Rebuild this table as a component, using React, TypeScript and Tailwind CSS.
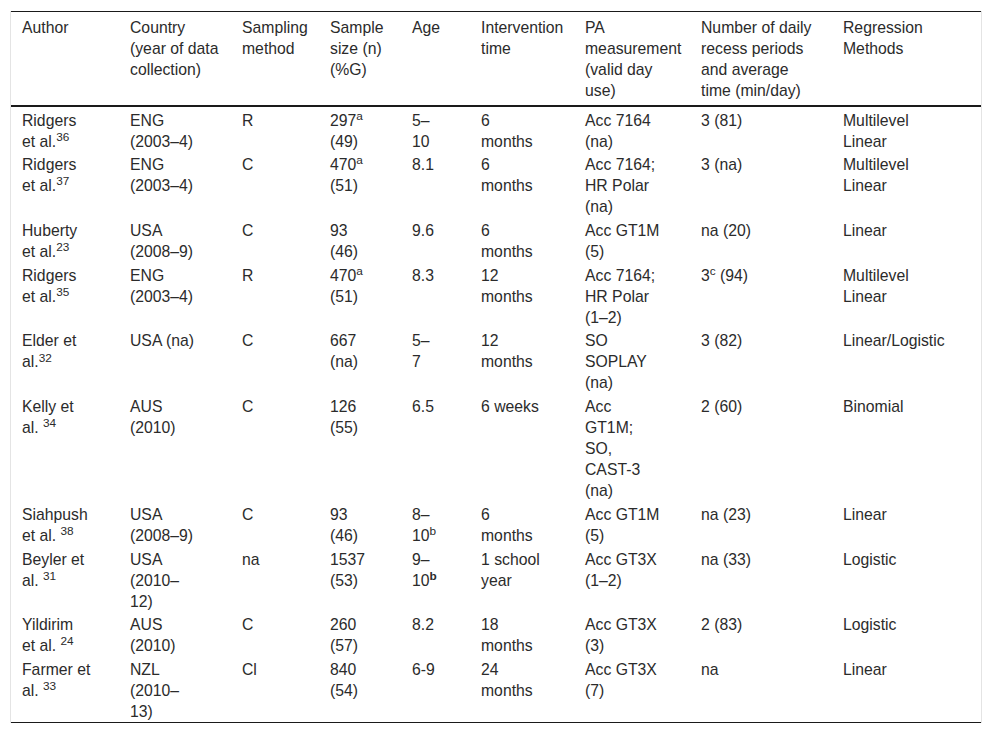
import type { ReactNode } from "react";

type Row = ReactNode[];

const S = ({ children }: { children: ReactNode }) => <sup>{children}</sup>;

const colWidths = [
  "w-[108px]",
  "w-[112px]",
  "w-[88px]",
  "w-[82px]",
  "w-[69px]",
  "w-[104px]",
  "w-[116px]",
  "w-[142px]",
  "w-[149px]",
];

const header: ReactNode[] = [
  <>Author</>,
  <>Country<br />(year of data<br />collection)</>,
  <>Sampling<br />method</>,
  <>Sample<br />size (n)<br />(%G)</>,
  <>Age</>,
  <>Intervention<br />time</>,
  <>PA<br />measurement<br />(valid day<br />use)</>,
  <>Number of daily<br />recess periods<br />and average<br />time (min/day)</>,
  <>Regression<br />Methods</>,
];

const rows: Row[] = [
  [
    <>Ridgers<br />et al.<S>36</S></>,
    <>ENG<br />(2003–4)</>,
    <>R</>,
    <>297<S>a</S><br />(49)</>,
    <>5–<br />10</>,
    <>6<br />months</>,
    <>Acc 7164<br />(na)</>,
    <>3 (81)</>,
    <>Multilevel<br />Linear</>,
  ],
  [
    <>Ridgers<br />et al.<S>37</S></>,
    <>ENG<br />(2003–4)</>,
    <>C</>,
    <>470<S>a</S><br />(51)</>,
    <>8.1</>,
    <>6<br />months</>,
    <>Acc 7164;<br />HR Polar<br />(na)</>,
    <>3 (na)</>,
    <>Multilevel<br />Linear</>,
  ],
  [
    <>Huberty<br />et al.<S>23</S></>,
    <>USA<br />(2008–9)</>,
    <>C</>,
    <>93<br />(46)</>,
    <>9.6</>,
    <>6<br />months</>,
    <>Acc GT1M<br />(5)</>,
    <>na (20)</>,
    <>Linear</>,
  ],
  [
    <>Ridgers<br />et al.<S>35</S></>,
    <>ENG<br />(2003–4)</>,
    <>R</>,
    <>470<S>a</S><br />(51)</>,
    <>8.3</>,
    <>12<br />months</>,
    <>Acc 7164;<br />HR Polar<br />(1–2)</>,
    <>3<S>c</S> (94)</>,
    <>Multilevel<br />Linear</>,
  ],
  [
    <>Elder et<br />al.<S>32</S></>,
    <>USA (na)</>,
    <>C</>,
    <>667<br />(na)</>,
    <>5–<br />7</>,
    <>12<br />months</>,
    <>SO<br />SOPLAY<br />(na)</>,
    <>3 (82)</>,
    <>Linear/Logistic</>,
  ],
  [
    <>Kelly et<br />al. <S>34</S></>,
    <>AUS<br />(2010)</>,
    <>C</>,
    <>126<br />(55)</>,
    <>6.5</>,
    <>6 weeks</>,
    <>Acc<br />GT1M;<br />SO,<br />CAST-3<br />(na)</>,
    <>2 (60)</>,
    <>Binomial</>,
  ],
  [
    <>Siahpush<br />et al. <S>38</S></>,
    <>USA<br />(2008–9)</>,
    <>C</>,
    <>93<br />(46)</>,
    <>8–<br />10<S>b</S></>,
    <>6<br />months</>,
    <>Acc GT1M<br />(5)</>,
    <>na (23)</>,
    <>Linear</>,
  ],
  [
    <>Beyler et<br />al. <S>31</S></>,
    <>USA<br />(2010–<br />12)</>,
    <>na</>,
    <>1537<br />(53)</>,
    <>9–<br />10<sup className="font-bold">b</sup></>,
    <>1 school<br />year</>,
    <>Acc GT3X<br />(1–2)</>,
    <>na (33)</>,
    <>Logistic</>,
  ],
  [
    <>Yildirim<br />et al. <S>24</S></>,
    <>AUS<br />(2010)</>,
    <>C</>,
    <>260<br />(57)</>,
    <>8.2</>,
    <>18<br />months</>,
    <>Acc GT3X<br />(3)</>,
    <>2 (83)</>,
    <>Logistic</>,
  ],
  [
    <>Farmer et<br />al. <S>33</S></>,
    <>NZL<br />(2010–<br />13)</>,
    <>Cl</>,
    <>840<br />(54)</>,
    <>6-9</>,
    <>24<br />months</>,
    <>Acc GT3X<br />(7)</>,
    <>na</>,
    <>Linear</>,
  ],
];

export default function App() {
  return (
    <div
      className="min-h-screen bg-white px-[10px] pt-[11px] text-[#2b2b2b]"
      style={{ fontFamily: '"Liberation Sans", Arial, sans-serif' }}
    >
      <div className="border-x border-[#e4e4e4]">
        <table className="w-full table-fixed border-collapse border-y border-[#1a1a1a] text-[15.75px] leading-[21px]">
          <colgroup>
            {colWidths.map((w, i) => (
              <col key={i} className={w} />
            ))}
          </colgroup>
          <thead>
            <tr className="border-b-2 border-[#1a1a1a]">
              {header.map((h, i) => (
                <th
                  key={i}
                  className="whitespace-nowrap pl-[11px] pt-[5px] pb-[4px] text-left align-top font-normal"
                >
                  {h}
                </th>
              ))}
            </tr>
          </thead>
          <tbody>
            {rows.map((row, r) => (
              <tr key={r}>
                {row.map((cell, c) => (
                  <td
                    key={c}
                    className="whitespace-nowrap pl-[11px] pt-[2.7px] align-top"
                  >
                    {cell}
                  </td>
                ))}
              </tr>
            ))}
          </tbody>
        </table>
      </div>
    </div>
  );
}
